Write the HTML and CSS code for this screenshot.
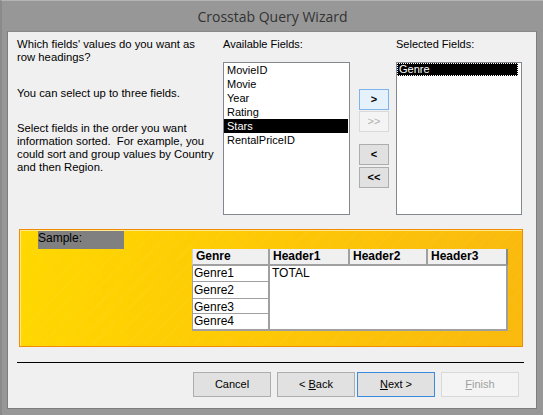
FILE: index.html
```html
<!DOCTYPE html>
<html>
<head>
<meta charset="utf-8">
<link rel="stylesheet" href="styles.css">
</head>
<body>
<div class="window">
  <div class="titlebar">Crosstab Query Wizard</div>
  <div class="client">
    <div class="toprow">
      <div class="intro">
        <p class="p1">Which fields' values do you want as<br>row headings?</p>
        <p class="p2">You can select up to three fields.</p>
        <p class="p3">Select fields in the order you want<br>information sorted.&nbsp; For example, you<br>could sort and group values by Country<br>and then Region.</p>
      </div>
      <div class="avail">
        <div class="label">Available Fields:</div>
        <div class="listbox">
          <div class="item">MovieID</div>
          <div class="item">Movie</div>
          <div class="item">Year</div>
          <div class="item">Rating</div>
          <div class="item sel">Stars</div>
          <div class="item">RentalPriceID</div>
        </div>
      </div>
      <div class="movebtns">
        <div class="mbtn hot">&gt;</div>
        <div class="mbtn dis">&gt;&gt;</div>
        <div class="mbtn gap">&lt;</div>
        <div class="mbtn">&lt;&lt;</div>
      </div>
      <div class="selected">
        <div class="label">Selected Fields:</div>
        <div class="listbox sellist">
          <div class="item sel focus">Genre</div>
        </div>
      </div>
    </div>
    <div class="sample">
      <div class="sample-inner">
        <div class="samplelabel">Sample:</div>
        <div class="grid">
          <div class="hdr first">Genre</div>
          <div class="hdr">Header1</div>
          <div class="hdr">Header2</div>
          <div class="hdr last">Header3</div>
          <div class="rowcol">
            <div class="gcell r1">Genre1</div>
            <div class="gcell r2">Genre2</div>
            <div class="gcell r3">Genre3</div>
            <div class="gcell r4">Genre4</div>
          </div>
          <div class="valarea">TOTAL</div>
        </div>
      </div>
    </div>
    <div class="sep"></div>
    <div class="buttons">
      <div class="btn">Cancel</div>
      <div class="btn back">&lt; <u>B</u>ack</div>
      <div class="btn next"><u>N</u>ext &gt;</div>
      <div class="btn finish"><u>F</u>inish</div>
    </div>
  </div>
</div>
</body>
</html>
```
FILE: styles.css
```css
html, body {
  margin: 0;
  padding: 0;
}
body {
  width: 543px;
  height: 415px;
  overflow: hidden;
  background: #979797;
  font-family: "Liberation Sans", Arial, sans-serif;
  font-size: 11px;
  color: #000;
}
.window {
  width: 541px;
  height: 414px;
  border-top: 1px solid #b4b4b4;
  border-left: 2px solid #8a8a8a;
}
.titlebar {
  height: 30px;
  line-height: 32px;
  text-align: center;
  font-family: "Open Sans", "Noto Sans", sans-serif;
  font-size: 14px;
  color: #333;
}
.client {
  margin-left: 5px;
  width: 528px;
  height: 376px;
  background: #f0f0f0;
  border: 1px solid #7d7d7d;
  border-top-color: #8a8a8a;
}
.toprow {
  display: flex;
  height: 183px;
  padding-top: 6px;
}
.intro {
  width: 206px;
  padding-left: 9px;
  font-size: 11.3px;
}
.intro p {
  margin: 0;
  line-height: 13px;
}
.p2 { margin-top: 23px !important; }
.p3 { margin-top: 22px !important; }
.avail {
  width: 136px;
}
.label {
  height: 13px;
  line-height: 13px;
  margin-bottom: 11px;
}
.listbox {
  width: 125px;
  height: 151px;
  background: #fff;
  border: 1px solid #828790;
}
.item {
  height: 14px;
  line-height: 14px;
  padding-left: 3px;
  white-space: nowrap;
}
.item.sel {
  background: #000;
  color: #fff;
  margin-right: 1px;
}
.sellist {
  width: 124px;
}
.item.focus {
  outline: 1px dotted #fff;
  outline-offset: -1px;
  height: 13px;
  line-height: 13px;
  padding-left: 2px;
  margin-right: 3px;
}
.movebtns {
  width: 37px;
  padding-top: 51px;
  display: flex;
  flex-direction: column;
  gap: 1px;
}
.mbtn {
  width: 28px;
  height: 19px;
  line-height: 19px;
  text-align: center;
  border: 1px solid #adadad;
  background: #e1e1e1;
  font-weight: bold;
  font-size: 11px;
}
.mbtn.hot {
  background: #e5f1fb;
  border-color: #7eb4ea;
}
.mbtn.dis {
  background: #f4f4f4;
  border-color: #d9d9d9;
  color: #b0b0b0;
  font-weight: normal;
}
.mbtn.gap {
  margin-top: 11px;
  margin-bottom: 1px;
}
.selected {
  width: 130px;
}
.sample {
  margin-left: 11px;
  margin-top: 8px;
  width: 502px;
  height: 116px;
  border: 1px solid #f08c00;
}
.sample-inner {
  height: 115px;
  border-top: 1px solid #ffe890;
  border-left: 1px solid #ffe890;
  background:
    repeating-linear-gradient(135deg, rgba(255,255,255,0) 0px, rgba(255,255,255,0) 10px, rgba(255,255,255,0.025) 10px, rgba(255,255,255,0.025) 12px),
    linear-gradient(100deg, #ffd800 0%, #fdc806 50%, #f9b90e 100%);
}
.samplelabel {
  margin-left: 17px;
  width: 86px;
  height: 18px;
  line-height: 14px;
  background: #808080;
  color: #000;
  font-size: 12px;
}
.grid {
  margin-left: 171px;
  width: 316px;
  display: grid;
  grid-template-columns: 78px 80px 78px 80px;
  grid-template-rows: 17px 65px;
}
.hdr {
  background: #f0f0f0;
  border-right: 2px solid #a0a0a0;
  border-bottom: 2px solid #a0a0a0;
  font-weight: bold;
  font-size: 12px;
  line-height: 15px;
  padding-left: 3px;
  box-sizing: border-box;
}
.hdr.first {
  border-left: 1px solid #d0d0d0;
}
.hdr.last {
  border-right: 2px solid #8a8a8a;
}
.rowcol {
  display: flex;
  flex-direction: column;
  background: #fff;
  border-left: 1px solid #a0a0a0;
  border-bottom: 2px solid #a0a0a0;
  box-sizing: border-box;
}
.gcell {
  border-bottom: 1px solid #a0a0a0;
  border-right: 2px solid #a0a0a0;
  box-sizing: border-box;
  font-size: 12px;
  line-height: 15px;
  padding-left: 1px;
}
.r1 { height: 16px; }
.r2 { height: 17px; line-height: 17px; }
.r3 { height: 15px; line-height: 16px; }
.r4 { height: 15px; border-bottom: none; }
.valarea {
  grid-column: 2 / span 3;
  background: #fff;
  border-right: 2px solid #a0a0a0;
  border-bottom: 2px solid #a0a0a0;
  box-sizing: border-box;
  font-size: 12px;
  line-height: 15px;
  padding-left: 2px;
}
.sep {
  margin-left: 9px;
  margin-top: 15px;
  width: 507px;
  height: 1px;
  background: #000;
}
.buttons {
  display: flex;
  margin-left: 185px;
  margin-top: 9px;
}
.btn {
  width: 76px;
  height: 23px;
  line-height: 23px;
  text-align: center;
  border: 1px solid #adadad;
  background: #e1e1e1;
  font-size: 11px;
}
.btn.back {
  margin-left: 6px;
}
.btn.next {
  margin-left: 2px;
  border-color: #3a8be0;
}
.btn.finish {
  margin-left: 6px;
  border-color: #d9d9d9;
  background: #f4f4f4;
  color: #a0a0a0;
}
```
